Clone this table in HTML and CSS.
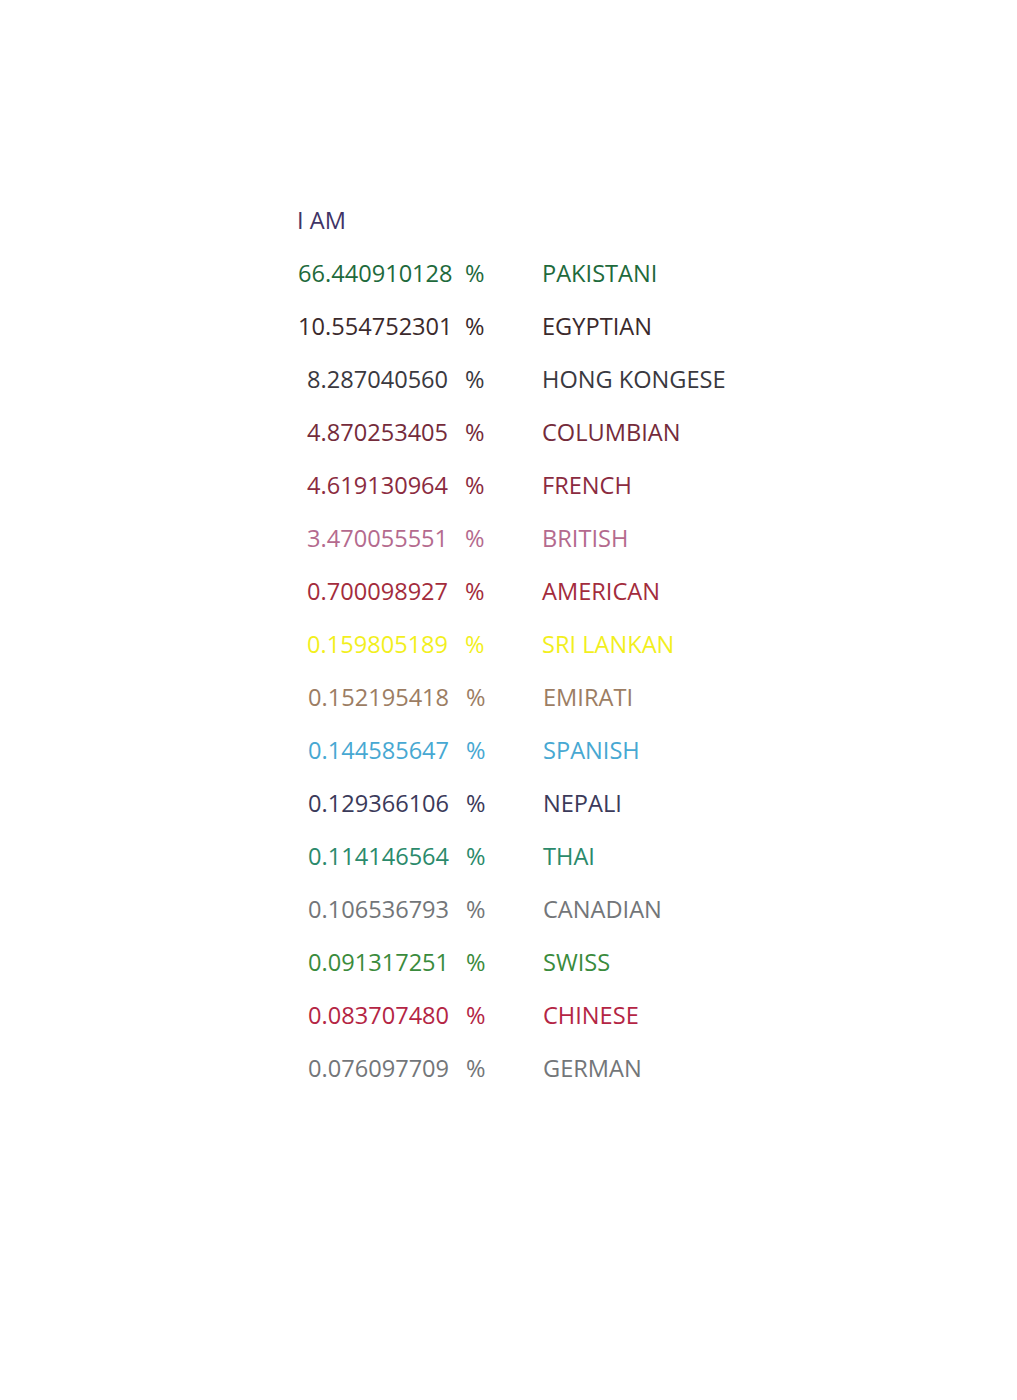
FILE: index.html
```html
<!DOCTYPE html>
<html lang="en">
<head>
<meta charset="utf-8">
<title>I AM</title>
<link rel="stylesheet" href="styles.css">
</head>
<body>
<main class="poster">
  <div class="title">I AM</div>
  <div class="list">
    <div class="row c-pak"><span class="num wide">66.440910128</span><span class="pct">%</span><span class="name">PAKISTANI</span></div>
    <div class="row c-egy"><span class="num wide">10.554752301</span><span class="pct">%</span><span class="name">EGYPTIAN</span></div>
    <div class="row c-hk"><span class="num">8.287040560</span><span class="pct">%</span><span class="name">HONG KONGESE</span></div>
    <div class="row c-col"><span class="num">4.870253405</span><span class="pct">%</span><span class="name">COLUMBIAN</span></div>
    <div class="row c-fr"><span class="num">4.619130964</span><span class="pct">%</span><span class="name">FRENCH</span></div>
    <div class="row c-br"><span class="num">3.470055551</span><span class="pct">%</span><span class="name">BRITISH</span></div>
    <div class="row c-am"><span class="num">0.700098927</span><span class="pct">%</span><span class="name">AMERICAN</span></div>
    <div class="row c-sl"><span class="num">0.159805189</span><span class="pct">%</span><span class="name">SRI LANKAN</span></div>
    <div class="row late c-em"><span class="num">0.152195418</span><span class="pct">%</span><span class="name">EMIRATI</span></div>
    <div class="row late c-sp"><span class="num">0.144585647</span><span class="pct">%</span><span class="name">SPANISH</span></div>
    <div class="row late c-ne"><span class="num">0.129366106</span><span class="pct">%</span><span class="name">NEPALI</span></div>
    <div class="row late c-th"><span class="num">0.114146564</span><span class="pct">%</span><span class="name">THAI</span></div>
    <div class="row late c-ca"><span class="num">0.106536793</span><span class="pct">%</span><span class="name">CANADIAN</span></div>
    <div class="row late c-sw"><span class="num">0.091317251</span><span class="pct">%</span><span class="name">SWISS</span></div>
    <div class="row late c-ch"><span class="num">0.083707480</span><span class="pct">%</span><span class="name">CHINESE</span></div>
    <div class="row late c-ge"><span class="num">0.076097709</span><span class="pct">%</span><span class="name">GERMAN</span></div>
  </div>
</main>
</body>
</html>
```

FILE: styles.css
```css
html, body {
  margin: 0;
  padding: 0;
  background: #ffffff;
}

.poster {
  width: 1017px;
  height: 1400px;
  box-sizing: border-box;
  padding: 194px 0 0 297px;
  font-family: "Open Sans", "Liberation Sans", sans-serif;
  font-size: 23.6px;
  line-height: 53px;
  font-weight: 400;
}

.title {
  color: #3f3466;
}

.list {
  display: flex;
  flex-direction: column;
}

.row {
  display: grid;
  grid-template-columns: 168px 77px auto;
}

.num {
  padding-left: 10px;
}

.num.wide {
  padding-left: 1px;
}

.row.late {
  padding-left: 1px;
}

.c-pak { color: #1e6a3c; }
.c-egy { color: #3b2a2c; }
.c-hk  { color: #3a393f; }
.c-col { color: #742b3b; }
.c-fr  { color: #8b2b40; }
.c-br  { color: #b46a8e; }
.c-am  { color: #a32c3c; }
.c-sl  { color: #f2ef1e; }
.c-em  { color: #9c7d63; }
.c-sp  { color: #47a8d2; }
.c-ne  { color: #3b3a5a; }
.c-th  { color: #2b8a6b; }
.c-ca  { color: #737679; }
.c-sw  { color: #3a8b3c; }
.c-ch  { color: #b42544; }
.c-ge  { color: #737679; }
```
